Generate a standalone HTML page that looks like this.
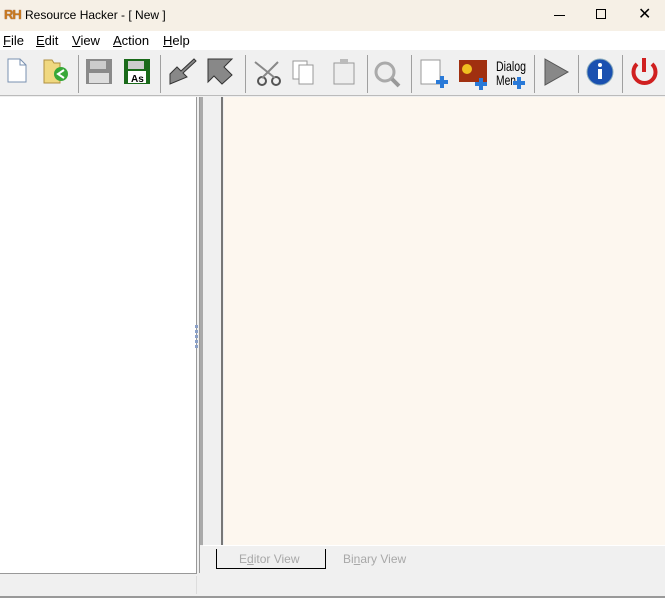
<!DOCTYPE html>
<html><head><style>
*{margin:0;padding:0;box-sizing:border-box}
body{width:665px;height:598px;position:relative;overflow:hidden;background:#f0f0f0;font-family:"Liberation Sans",sans-serif;font-size:12px;color:#000}
.a{position:absolute}
.sep{position:absolute;top:55px;width:1px;height:38px;background:#a0a0a0}
.menu span{position:absolute;top:2px}
u{text-decoration:underline}
</style></head><body>
<div class="a" style="left:0;top:0;width:665px;height:31px;background:#f6f0e6"></div>
<div class="a" style="left:4px;top:7px;font-weight:bold;font-size:13px;color:#c8781e;letter-spacing:-1px;text-shadow:0 0 1px #703010">RH</div>
<div class="a" style="left:25px;top:8px;font-size:12px">Resource Hacker - [ New ]</div>
<div class="a" style="left:554px;top:15px;width:11px;height:1px;background:#000"></div>
<div class="a" style="left:596px;top:9px;width:10px;height:10px;border:1px solid #000"></div>
<div class="a" style="left:638px;top:4px;font-size:16px">✕</div>
<div class="a menu" style="left:0;top:31px;width:665px;height:19px;background:#fff;font-size:13px"><span style="left:3px"><u>F</u>ile</span><span style="left:36px"><u>E</u>dit</span><span style="left:72px"><u>V</u>iew</span><span style="left:113px"><u>A</u>ction</span><span style="left:163px"><u>H</u>elp</span></div>
<div class="a" style="left:0;top:50px;width:665px;height:46px;background:#f0f0f0;border-bottom:1px solid #bbb"></div>
<svg class="a" style="left:0;top:50px" width="665" height="46">
<path d="M8 9h12l6 6v17H8z" fill="#fff" stroke="#7890b0"/><path d="M20 9v6h6" fill="none" stroke="#7890b0"/>
<path d="M44 10h8l2 3h6v20H44z" fill="#f0d880" stroke="#b09040"/><circle cx="61" cy="24" r="7" fill="#38a838"/><path d="M64 20l-6 4 6 4" stroke="#fff" stroke-width="2" fill="none"/>
<rect x="86" y="9" width="26" height="25" fill="#8a8a8a"/><rect x="90" y="11" width="16" height="8" fill="#ccc"/><rect x="89" y="23" width="20" height="10" fill="#ddd"/>
<rect x="124" y="9" width="26" height="25" fill="#1a6a1a"/><rect x="128" y="11" width="16" height="8" fill="#ccc"/><rect x="128" y="21" width="18" height="12" fill="#fff"/><text x="131" y="32" font-size="10" font-family="Liberation Sans" font-weight="bold">As</text>
<path d="M170 24l7-7 4 4 13-12 2 2-13 12 4 4-17 7z" fill="#888" stroke="#333" transform="translate(0,0)"/>
<path d="M208 9h24l-8 8 8 8-10 9-8-8-6 6z" fill="#888" stroke="#333"/>
<circle cx="262" cy="31" r="4" fill="none" stroke="#555" stroke-width="2"/><circle cx="276" cy="31" r="4" fill="none" stroke="#555" stroke-width="2"/><path d="M255 12l20 16M278 12l-16 16" stroke="#888" stroke-width="2"/>
<rect x="293" y="11" width="14" height="18" fill="#fff" stroke="#999"/><rect x="299" y="15" width="14" height="19" fill="#fff" stroke="#999"/>
<rect x="334" y="13" width="20" height="21" fill="#eee" stroke="#999"/><rect x="340" y="9" width="8" height="5" fill="#bbb"/>
<circle cx="385" cy="22" r="9" fill="#eee" stroke="#aaa" stroke-width="3"/><path d="M392 29l7 7" stroke="#999" stroke-width="4"/>
<rect x="421" y="10" width="19" height="24" fill="#fff" stroke="#999"/><path d="M442 26v12M436 32h12" stroke="#2a7ad8" stroke-width="4"/>
<rect x="459" y="10" width="28" height="22" fill="#a03010"/><circle cx="467" cy="19" r="5" fill="#f0c020"/><path d="M481 28v12M475 34h12" stroke="#2a7ad8" stroke-width="4"/>
<text x="496" y="21" font-size="14" font-family="Liberation Sans" textLength="30" lengthAdjust="spacingAndGlyphs">Dialog</text><text x="496" y="35" font-size="14" font-family="Liberation Sans" textLength="20" lengthAdjust="spacingAndGlyphs">Men</text><path d="M519 27v12M513 33h12" stroke="#2a7ad8" stroke-width="4"/>
<path d="M545 9l23 13-23 13z" fill="#888" stroke="#555"/>
<circle cx="600" cy="22" r="13" fill="#1a50b0" stroke="#8ab" stroke-width="1"/><circle cx="600" cy="15" r="2" fill="#fff"/><rect x="598" y="19" width="4" height="10" fill="#fff"/>
<path d="M637 14a11 11 0 1 0 15 0" fill="none" stroke="#d02020" stroke-width="4"/><path d="M644 8v14" stroke="#d02020" stroke-width="4"/>
</svg>
<div class="sep" style="left:78px"></div><div class="sep" style="left:160px"></div><div class="sep" style="left:245px"></div><div class="sep" style="left:367px"></div><div class="sep" style="left:411px"></div><div class="sep" style="left:534px"></div><div class="sep" style="left:578px"></div><div class="sep" style="left:622px"></div>
<div class="a" style="left:0;top:97px;width:197px;height:477px;background:#fff;border-right:1px solid #999;border-bottom:1px solid #999"></div>
<div class="a" style="left:195px;top:325px;width:3px;height:24px;background:repeating-linear-gradient(#8aa0c8 0 3px,transparent 3px 5px)"></div>
<div class="a" style="left:199px;top:97px;width:466px;height:476px;background:#f0f0f0;border-left:1px solid #999"></div>
<div class="a" style="left:200px;top:97px;width:3px;height:448px;background:#aaa"></div>
<div class="a" style="left:221px;top:97px;width:2px;height:448px;background:#777"></div>
<div class="a" style="left:224px;top:97px;width:441px;height:448px;background:#fdf7ef"></div>
<div class="a" style="left:203px;top:545px;width:462px;height:1px;background:#fff"></div>
<div class="a" style="left:216px;top:549px;width:110px;height:20px;border:1px solid #000;border-top:none;color:#a8a8a8;padding:3px 0 0 22px;font-size:12px">E<u>d</u>itor View</div>
<div class="a" style="left:343px;top:552px;color:#a8a8a8;font-size:12px">Bi<u>n</u>ary View</div>
<div class="a" style="left:0;top:596px;width:665px;height:2px;background:#999"></div>
<div class="a" style="left:196px;top:576px;width:1px;height:18px;background:#ddd"></div>
</body></html>
